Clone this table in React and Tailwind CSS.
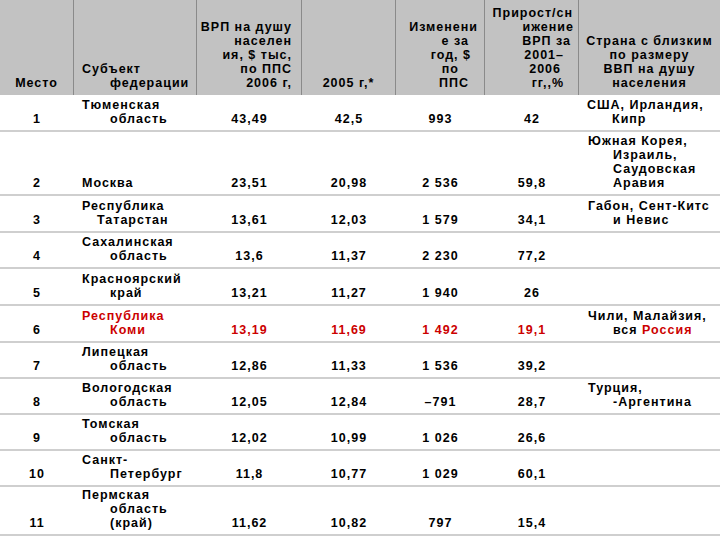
import React from "react";

const COLS = "grid grid-cols-[74px_123px_105px_94px_89px_94px_141px]";
const R = "text-[#cc0000]";

function Lines({ lines, className = "" }) {
  return (
    <div className={className}>
      {lines.map((l, i) => (
        <div key={i} className={`whitespace-nowrap ${l.c || ""}`}>
          {l.t}
        </div>
      ))}
    </div>
  );
}

const rows = [
  {
    h: "h-[37px]",
    n: "1",
    name: [{ t: "Тюменская", c: "pl-[8px]" }, { t: "область", c: "pl-[36px]" }],
    v: ["43,49", "42,5", "993", "42"],
    c: [{ t: "США, Ирландия,", c: "pl-[8px]" }, { t: "Кипр", c: "pl-[33px]" }],
  },
  {
    h: "h-[64px]",
    n: "2",
    name: [{ t: "Москва", c: "pl-[8px]" }],
    v: ["23,51", "20,98", "2 536", "59,8"],
    c: [
      { t: "Южная Корея,", c: "pl-[9px]" },
      { t: "Израиль,", c: "pl-[34px]" },
      { t: "Саудовская", c: "pl-[34px]" },
      { t: "Аравия", c: "pl-[34px]" },
    ],
  },
  {
    h: "h-[37px]",
    n: "3",
    name: [{ t: "Республика", c: "pl-[8px]" }, { t: "Татарстан", c: "pl-[23px]" }],
    v: ["13,61", "12,03", "1 579", "34,1"],
    c: [{ t: "Габон, Сент-Китс", c: "pl-[9px]" }, { t: "и Невис", c: "pl-[34px]" }],
  },
  {
    h: "h-[36px]",
    n: "4",
    name: [{ t: "Сахалинская", c: "pl-[8px]" }, { t: "область", c: "pl-[36px]" }],
    v: ["13,6", "11,37", "2 230", "77,2"],
    c: [],
  },
  {
    h: "h-[37px]",
    n: "5",
    name: [{ t: "Красноярский", c: "pl-[8px]" }, { t: "край", c: "pl-[36px]" }],
    v: ["13,21", "11,27", "1 940", "26"],
    c: [],
  },
  {
    h: "h-[37px]",
    n: "6",
    red: true,
    name: [{ t: "Республика", c: "pl-[8px]" }, { t: "Коми", c: "pl-[36px]" }],
    v: ["13,19", "11,69", "1 492", "19,1"],
    c: [
      { t: "Чили, Малайзия,", c: "pl-[9px]" },
      {
        t: (
          <>
            вся <span className={R}>Россия</span>
          </>
        ),
        c: "pl-[34px]",
      },
    ],
  },
  {
    h: "h-[36px]",
    n: "7",
    name: [{ t: "Липецкая", c: "pl-[8px]" }, { t: "область", c: "pl-[36px]" }],
    v: ["12,86", "11,33", "1 536", "39,2"],
    c: [],
  },
  {
    h: "h-[36px]",
    n: "8",
    name: [{ t: "Вологодская", c: "pl-[8px]" }, { t: "область", c: "pl-[36px]" }],
    v: ["12,05", "12,84", "–791", "28,7"],
    c: [{ t: "Турция,", c: "pl-[9px]" }, { t: "-Аргентина", c: "pl-[34px]" }],
  },
  {
    h: "h-[36px]",
    n: "9",
    name: [{ t: "Томская", c: "pl-[8px]" }, { t: "область", c: "pl-[36px]" }],
    v: ["12,02", "10,99", "1 026", "26,6"],
    c: [],
  },
  {
    h: "h-[36px]",
    n: "10",
    name: [{ t: "Санкт-", c: "pl-[8px]" }, { t: "Петербург", c: "pl-[36px]" }],
    v: ["11,8", "10,77", "1 029", "60,1"],
    c: [],
  },
  {
    h: "h-[49px]",
    n: "11",
    name: [
      { t: "Пермская", c: "pl-[8px]" },
      { t: "область", c: "pl-[36px]" },
      { t: "(край)", c: "pl-[36px]" },
    ],
    v: ["11,62", "10,82", "797", "15,4"],
    c: [],
  },
];

const cell = "flex flex-col justify-end pb-[4px] whitespace-nowrap";
const hcell = "flex flex-col justify-end pb-[5px] border-r border-[#8a8a8a] whitespace-nowrap";

export default function App() {
  return (
    <div
      className="w-[720px] h-[540px] bg-white text-black font-bold text-[12.5px] leading-[14px] tracking-[1px] overflow-hidden"
      style={{ fontFamily: '"Liberation Sans", Arial, sans-serif' }}
    >
      <div className={`${COLS} h-[95px] bg-[#c2c2c2]`}>
        <div className={`${hcell} text-center`}>Место</div>
        <div className={hcell}>
          <Lines lines={[{ t: "Субъект", c: "pl-[8px]" }, { t: "федерации", c: "pl-[36px]" }]} />
        </div>
        <div className={`${hcell} text-right pr-[9px]`}>
          <Lines
            lines={[
              { t: "ВРП на душу" },
              { t: "населен" },
              { t: "ия, $ тыс," },
              { t: "по ППС" },
              { t: "2006 г," },
            ]}
          />
        </div>
        <div className={`${hcell} text-center`}>2005 г,*</div>
        <div className={`${hcell} text-right`}>
          <Lines
            lines={[
              { t: "Изменени", c: "pr-[6px]" },
              { t: "е за", c: "pr-[15px]" },
              { t: "год, $", c: "pr-[13px]" },
              { t: "по", c: "pr-[25px]" },
              { t: "ППС", c: "pr-[15px]" },
            ]}
          />
        </div>
        <div className={`${hcell} text-right`}>
          <Lines
            lines={[
              { t: "Прирост/сн", c: "pr-[5px]" },
              { t: "ижение", c: "pr-[4px]" },
              { t: "ВРП за", c: "pr-[7px]" },
              { t: "2001–", c: "pr-[14px]" },
              { t: "2006", c: "pr-[17px]" },
              { t: "гг,,%", c: "pr-[14px]" },
            ]}
          />
        </div>
        <div className="flex flex-col justify-end pb-[5px] text-center">
          <Lines
            lines={[
              { t: "Страна с близким" },
              { t: "по размеру" },
              { t: "ВВП на душу" },
              { t: "населения" },
            ]}
          />
        </div>
      </div>
      {rows.map((r, i) => {
        const rc = r.red ? R : "";
        return (
          <div key={i} className={`${COLS} ${r.h} border-b-2 border-[#cfcfcf]`}>
            <div className={`${cell} text-center`}>{r.n}</div>
            <div className={`${cell} ${rc}`}>
              <Lines lines={r.name} />
            </div>
            {r.v.map((v, j) => (
              <div key={j} className={`${cell} text-center ${rc}`}>
                {v}
              </div>
            ))}
            <div className={cell}>
              <Lines lines={r.c} />
            </div>
          </div>
        );
      })}
    </div>
  );
}
